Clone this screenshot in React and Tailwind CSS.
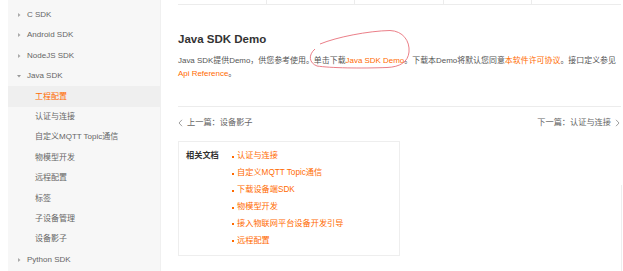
import React from "react";

const sdkMenu = [
    { label: "C SDK", open: false },
    { label: "Android SDK", open: false },
    { label: "NodeJS SDK", open: false },
    {
        label: "Java SDK",
        open: true,
        children: ["工程配置", "认证与连接", "自定义MQTT Topic通信", "物模型开发", "远程配置", "标签", "子设备管理", "设备影子"]
    },
    { label: "Python SDK", open: false }
];

const relatedDocs = ["认证与连接", "自定义MQTT Topic通信", "下载设备端SDK", "物模型开发", "接入物联网平台设备开发引导", "远程配置"];

const Caret = ({ open }) => (
    <svg width="6" height="6" viewBox="0 0 6 6" className="shrink-0">
        {open ? <path d="M1 2 L5 2 L3 4.5 Z" fill="#999" /> : <path d="M2 1 L4.5 3 L2 5 Z" fill="#aaa" />}
    </svg>
);

const Sidebar = () => (
    <aside className="ml-2 w-[152px] shrink-0 bg-[#f7f7f7] pt-[4.8px] text-[8px] text-[#666]">
        {sdkMenu.map((item) => (
            <div key={item.label}>
                <div className="flex h-[20.4px] items-center gap-[5px] pl-[8px]">
                    <Caret open={item.open} />
                    <span>{item.label}</span>
                </div>
                {item.children &&
                    item.children.map((child, i) => (
                        <div
                            key={child}
                            className={
                                i === 0
                                    ? "flex h-[20.4px] items-center bg-[#efefef] pl-[27px] text-[#ff6a00]"
                                    : "flex h-[20.4px] items-center pl-[27px]"
                            }
                        >
                            {child}
                        </div>
                    ))}
            </div>
        ))}
    </aside>
);

const Chevron = ({ dir }) => (
    <svg width="5" height="8" viewBox="0 0 5 8" className="shrink-0">
        <path d={dir === "left" ? "M4 0.8 L1 4 L4 7.2" : "M1 0.8 L4 4 L1 7.2"} fill="none" stroke="#888" strokeWidth="0.8" />
    </svg>
);

const App = () => {
    return (
        <div
            className="relative flex h-[271px] w-[623px] overflow-hidden bg-white"
            style={{ fontFamily: '"Liberation Sans", "Noto Sans CJK SC", sans-serif' }}
        >
            <Sidebar />

            <main className="flex-1 border-l border-[#f0f0f0] pl-[17px] pr-[2px]">
                <div className="grid h-[5px] grid-cols-5 border-b border-[#ececec]">
                    <div className="border-r border-[#ececec]" />
                    <div className="border-r border-[#ececec]" />
                    <div className="border-r border-[#ececec]" />
                    <div className="border-r border-[#ececec]" />
                    <div />
                </div>

                <h2 className="mt-[27px] h-[14px] text-[11.5px] font-bold leading-[14px] text-[#333]">Java SDK Demo</h2>

                <p className="mt-[9.4px] text-[7.95px] leading-[12.7px] text-[#555]">
                    <span className="whitespace-nowrap">
                        Java SDK提供Demo，供您参考使用。单击下载<span className="text-[#ff6a00]">Java SDK Demo</span>
                        。下载本Demo将默认您同意<span className="text-[#ff6a00]">本软件许可协议</span>。接口定义参见
                    </span>
                    <br />
                    <span className="text-[#ff6a00]">Api Reference</span>。
                </p>

                <div className="mt-[25px] border-t border-[#ececec]" />

                <div className="mt-[10.6px] flex h-[12px] items-center justify-between text-[8.2px] text-[#666]">
                    <div className="flex items-center gap-[4px]">
                        <Chevron dir="left" />
                        <span>上一篇：设备影子</span>
                    </div>
                    <div className="flex items-center gap-[4px] pr-[1px]">
                        <span>下一篇：认证与连接</span>
                        <Chevron dir="right" />
                    </div>
                </div>

                <div className="mt-[11.7px] flex w-[222px] border border-[#eeeeee] pb-[5.5px] pl-[7px] pt-[6.3px] text-[8.2px]">
                    <div className="w-[46px] shrink-0 font-bold leading-[16.9px] text-[#333]">相关文档</div>
                    <ul className="leading-[16.9px] text-[#ff6a00]">
                        {relatedDocs.map((doc) => (
                            <li key={doc} className="flex items-center gap-[3px]">
                                <span className="h-[2px] w-[2px] bg-[#ff6a00]" />
                                {doc}
                            </li>
                        ))}
                    </ul>
                </div>
            </main>

            <div className="absolute right-[1px] top-[185px] h-[86px] w-px bg-[#eeeeee]" />

            <svg className="pointer-events-none absolute left-0 top-0" width="623" height="271">
                <path
                    d="M 320 44 C 337 37, 368 31, 390 30.5 C 403 31, 410 41, 409 52 C 408 62, 400 67, 387 67.5 C 361 68.5, 330 68, 317 66 C 309 63, 308 55, 315 49"
                    fill="none"
                    stroke="#e8707a"
                    strokeWidth="0.9"
                />
            </svg>
        </div>
    );
};

export default App;
